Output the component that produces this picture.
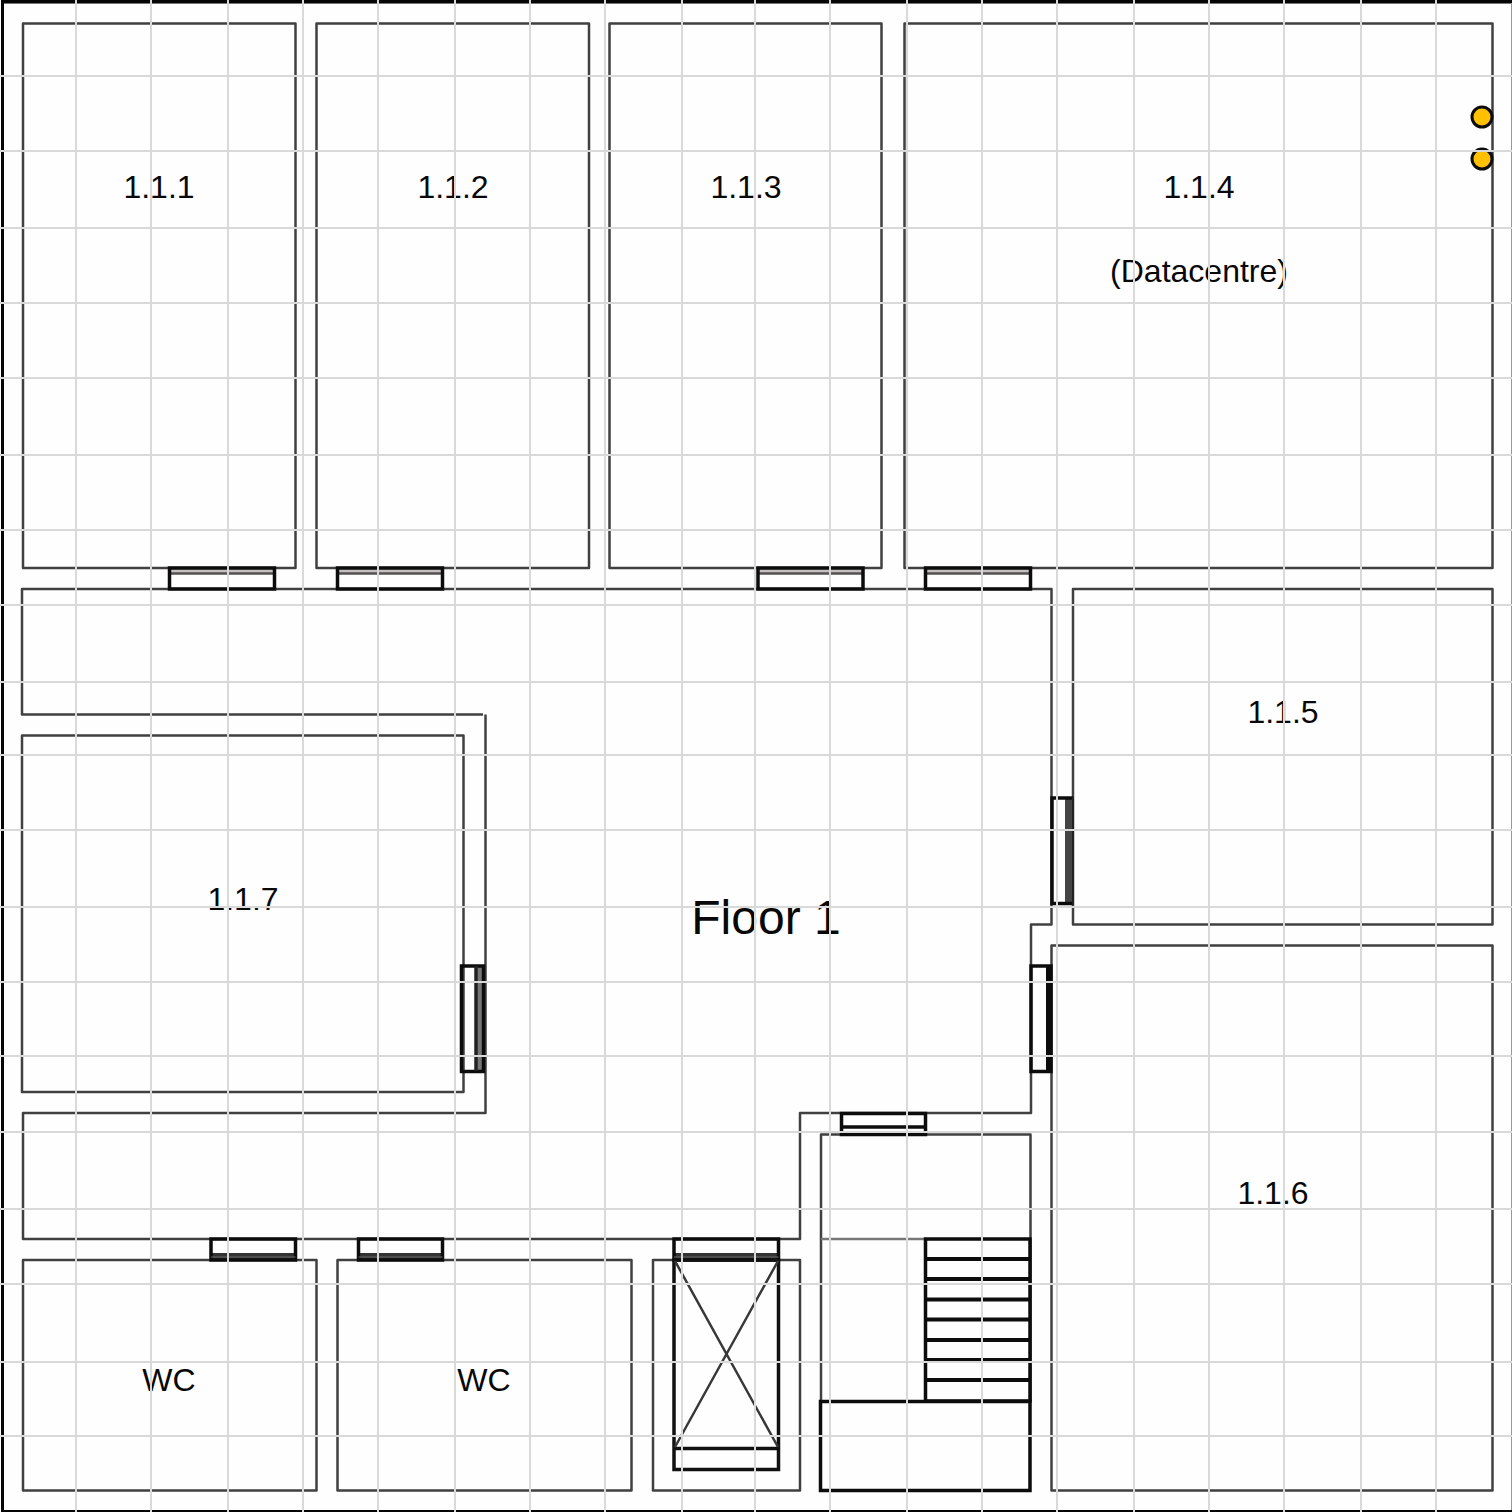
const GRID_X = [76, 151, 228, 303, 378, 455, 530, 605, 682, 755, 830, 907, 982, 1057, 1134, 1209, 1284, 1361, 1436];
const GRID_Y = [76, 151, 228, 303, 378, 455, 530, 605, 682, 755, 830, 907, 982, 1056, 1132, 1209, 1284, 1362, 1436];

const ROOMS = [
  'M23 23.5H295.5V568H23Z',
  'M316.5 23.5H589V568H316.5Z',
  'M609.5 23.5H881.5V568H609.5Z',
  'M904.5 23.5H1492.5V568H904.5Z',
  'M1073 589H1492.5V924.5H1073Z',
  'M1051.5 945.5H1492.5V1490.5H1051.5Z',
  'M22 735.5H463.5V1092H22Z',
  'M23 1260H316.5V1490.5H23Z',
  'M337.5 1260H631.5V1490.5H337.5Z',
  'M653 1260H800V1490.5H653Z',
  'M821 1401V1134.5H1030.5V1401',
];

const CORRIDOR =
  'M483 714.5H22V589H1051.5V924.5H1031V1113H800V1239H23V1113H485.5V714.5';

const TOP_DOORS = [169.5, 337.5, 758, 925.5];

const BOTTOM_DOORS = [
  { x: 211, width: 84.5 },
  { x: 358.5, width: 84 },
  { x: 674, width: 104.5 },
];

const STEPS = [1259, 1279, 1299.5, 1319.5, 1340, 1360, 1380];

const LABELS = [
  { text: '1.1.1', x: 159, y: 198 },
  { text: '1.1.2', x: 453, y: 198 },
  { text: '1.1.3', x: 746, y: 198 },
  { text: '1.1.4', x: 1199, y: 198 },
  { text: '(Datacentre)', x: 1199, y: 282 },
  { text: '1.1.5', x: 1283, y: 723 },
  { text: '1.1.6', x: 1273, y: 1204 },
  { text: '1.1.7', x: 243, y: 910 },
  { text: 'WC', x: 169, y: 1391 },
  { text: 'WC', x: 484, y: 1391 },
];

const SENSORS = [
  { x: 1482, y: 117 },
  { x: 1482, y: 159 },
];

function Walls() {
  return (
    <g fill="none" stroke="#404040" strokeWidth="2.5" strokeLinejoin="round">
      {ROOMS.map((d) => (
        <path key={d} d={d} />
      ))}
      <path d={CORRIDOR} />
      <path d="M821 1239H926" stroke="#777" />
    </g>
  );
}

function Doors() {
  return (
    <g fill="none" stroke="#0c0c0c" strokeWidth="3.5">
      {TOP_DOORS.map((x) => (
        <g key={x}>
          <rect x={x} y="568" width="105" height="5" fill="#c4c0c0" stroke="none" />
          <path d={`M${x} 573.5h105`} stroke="#555050" strokeWidth="2.5" />
          <rect x={x} y="568" width="105" height="21" />
        </g>
      ))}
      {BOTTOM_DOORS.map(({ x, width }) => (
        <g key={x}>
          <rect x={x} y="1253" width={width} height="7" fill="#333" stroke="none" />
          <rect x={x} y="1239" width={width} height="21" />
          <path d={`M${x} 1257h${width}`} stroke="#6a6a6a" strokeWidth="1" />
        </g>
      ))}
      <rect x="841.5" y="1113.5" width="84" height="21" />
      <path d="M842 1127H925" />
      <rect x="1065" y="798" width="8" height="105.5" fill="#444" stroke="none" />
      <path d="M1073 798H1052V903.5H1073" />
      <path d="M1073 797V905" stroke="#222" strokeWidth="2" />
      <rect x="1046" y="966" width="6" height="105" fill="#0c0c0c" stroke="none" />
      <rect x="1031" y="966" width="20" height="105.5" />
      <rect x="476" y="966" width="7" height="105" fill="#777" stroke="none" />
      <rect x="461.5" y="966" width="22" height="105.5" />
      <path d="M476 966V1071" stroke="#222" />
    </g>
  );
}

function Lift() {
  return (
    <g fill="none" stroke="#111" strokeWidth="3.5">
      <path d="M674 1260H778.5V1469.5H674Z" />
      <path d="M674 1448.5H778.5" />
      <path d="M675 1261L778 1447M778 1261L675 1447" stroke="#383838" strokeWidth="2.5" />
    </g>
  );
}

function Stairs() {
  return (
    <g fill="none" stroke="#0c0c0c" strokeWidth="3.5">
      <path d="M925.5 1239H1030V1401H925.5Z" />
      {STEPS.map((y) => (
        <path key={y} d={`M926 ${y}H1030`} strokeWidth="4" />
      ))}
      <path d="M820.5 1401.5H1030V1490.5H820.5Z" />
    </g>
  );
}

export default function App() {
  return (
    <main className="w-full bg-[#fefefe]">
      <svg
        viewBox="0 0 1512 1512"
        role="img"
        aria-label="Floor 1 plan"
        className="block h-auto w-full font-['Liberation_Sans',Arial,sans-serif]"
      >
        <path d="M1 0H1512V3H4V1510H1512V1512H1Z" fill="#050505" />
        <path d="M4 3.5H1511" stroke="#777" />
        <path d="M1511.5 3V1510" stroke="#999" />
        <Walls />
        <Doors />
        <Lift />
        <Stairs />
        {SENSORS.map(({ x, y }) => (
          <circle key={y} cx={x} cy={y} r="10" fill="#ffc000" stroke="#0c0c0c" strokeWidth="3" />
        ))}
        <g fill="#080808" textAnchor="middle">
          {LABELS.map(({ text, x, y }) => (
            <text key={`${text}-${x}`} x={x} y={y} fontSize="32">
              {text}
            </text>
          ))}
          <text x="766" y="934" fontSize="48">
            Floor 1
          </text>
        </g>
        <g stroke="#d9d9d9" strokeWidth="2">
          {GRID_X.map((x) => (
            <path key={x} d={`M${x} 0V1512`} />
          ))}
          {GRID_Y.map((y) => (
            <path key={y} d={`M0 ${y}H1512`} />
          ))}
        </g>
      </svg>
    </main>
  );
}
